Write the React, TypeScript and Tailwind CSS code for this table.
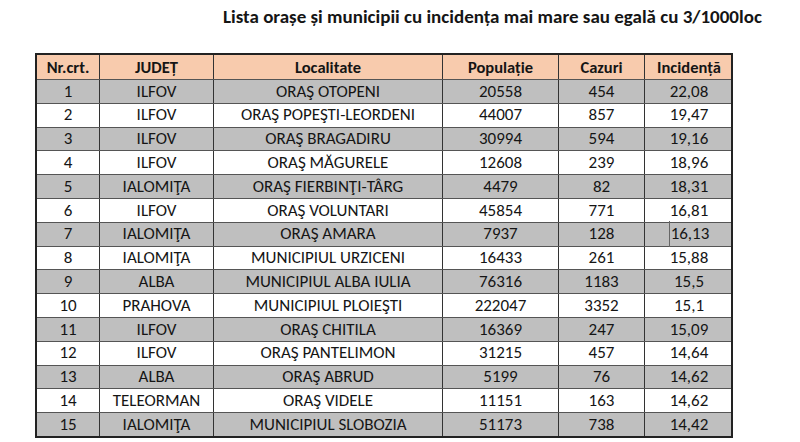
const COLS = [
  { label: 'Nr.crt.', w: 'w-[62px]' },
  { label: 'JUDEȚ', w: 'w-[114px]' },
  { label: 'Localitate', w: 'w-[229px]' },
  { label: 'Populație', w: 'w-[116px]' },
  { label: 'Cazuri', w: 'w-[86px]' },
  { label: 'Incidență', w: 'w-[89px]' },
];

const ROWS: [string, string, string, string, string][] = [
  ['ILFOV', 'ORAŞ OTOPENI', '20558', '454', '22,08'],
  ['ILFOV', 'ORAŞ POPEŞTI-LEORDENI', '44007', '857', '19,47'],
  ['ILFOV', 'ORAŞ BRAGADIRU', '30994', '594', '19,16'],
  ['ILFOV', 'ORAŞ MĂGURELE', '12608', '239', '18,96'],
  ['IALOMIŢA', 'ORAŞ FIERBINŢI-TÂRG', '4479', '82', '18,31'],
  ['ILFOV', 'ORAŞ VOLUNTARI', '45854', '771', '16,81'],
  ['IALOMIŢA', 'ORAŞ AMARA', '7937', '128', '16,13'],
  ['IALOMIŢA', 'MUNICIPIUL URZICENI', '16433', '261', '15,88'],
  ['ALBA', 'MUNICIPIUL ALBA IULIA', '76316', '1183', '15,5'],
  ['PRAHOVA', 'MUNICIPIUL PLOIEŞTI', '222047', '3352', '15,1'],
  ['ILFOV', 'ORAŞ CHITILA', '16369', '247', '15,09'],
  ['ILFOV', 'ORAŞ PANTELIMON', '31215', '457', '14,64'],
  ['ALBA', 'ORAŞ ABRUD', '5199', '76', '14,62'],
  ['TELEORMAN', 'ORAŞ VIDELE', '11151', '163', '14,62'],
  ['IALOMIŢA', 'MUNICIPIUL SLOBOZIA', '51173', '738', '14,42'],
];

export default function App() {
  return (
    <div
      className="w-[800px] h-[442px] bg-white text-[#151515] overflow-hidden"
      style={{ fontFamily: 'Carlito, Lato, "Open Sans", sans-serif' }}
    >
      {/* Title */}
      <div className="pl-[223px] pt-[5px] h-[53px]">
        <h1 className="text-[19px] font-bold leading-[24px] whitespace-nowrap">
          Lista orașe și municipii cu incidența mai mare sau egală cu 3/1000loc
        </h1>
      </div>

      {/* Table */}
      <div className="ml-[35px] w-[698px] border-2 border-[#222]">
        <div className="flex h-[24px] bg-[#f8cbad] font-bold text-[16.5px]">
          {COLS.map((c, i) => (
            <div
              key={c.label}
              className={`${c.w} flex items-center justify-center shrink-0 ${
                i > 0 ? 'border-l border-[#333]' : ''
              }`}
            >
              {c.label}
            </div>
          ))}
        </div>

        {ROWS.map((r, idx) => {
          const cells = [String(idx + 1), ...r];
          return (
            <div
              key={idx}
              className={`flex h-[23.8px] border-t border-[#555] text-[17px] ${
                idx % 2 === 0 ? 'bg-[#bfbfbf]' : 'bg-white'
              }`}
            >
              {cells.map((v, i) => (
                <div
                  key={i}
                  className={`${COLS[i].w} flex items-center justify-center shrink-0 ${
                    i > 0 ? 'border-l border-[#333]' : ''
                  }`}
                >
                  {idx === 6 && i === 5 ? (
                    <span className="border-l border-[#666] pl-px">{v}</span>
                  ) : (
                    v
                  )}
                </div>
              ))}
            </div>
          );
        })}
      </div>
    </div>
  );
}
